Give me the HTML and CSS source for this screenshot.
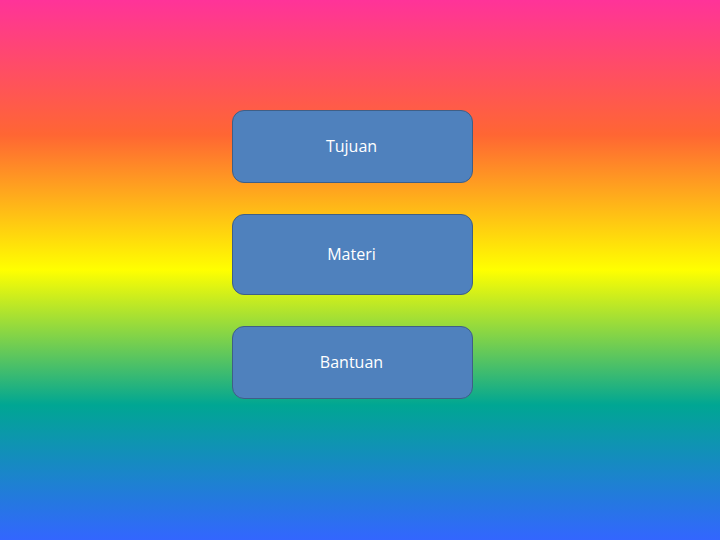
FILE: index.html
```html
<!DOCTYPE html>
<html>
<head>
<meta charset="utf-8">
<link rel="stylesheet" href="styles.css">
</head>
<body>
<div class="menu">
  <button class="btn">Tujuan</button>
  <button class="btn btn-tall">Materi</button>
  <button class="btn">Bantuan</button>
</div>
</body>
</html>
```
FILE: styles.css
```css
html, body {
  margin: 0;
  height: 100%;
}
body {
  background: linear-gradient(to bottom, #ff3399 0%, #ff6633 25%, #ffff00 50%, #00a693 75%, #3366ff 100%);
  font-family: "Open Sans", sans-serif;
}
.menu {
  display: flex;
  flex-direction: column;
  gap: 31px;
  padding: 110px 0 0 232px;
}
.btn {
  box-sizing: border-box;
  width: 241px;
  height: 73px;
  background: #4f81bd;
  border: 1px solid #3f5f86;
  border-radius: 12px;
  color: #ffffff;
  font-family: "Open Sans", sans-serif;
  font-size: 16px;
  padding: 0 2px 2px 0;
}
.btn-tall {
  height: 81px;
}
```
